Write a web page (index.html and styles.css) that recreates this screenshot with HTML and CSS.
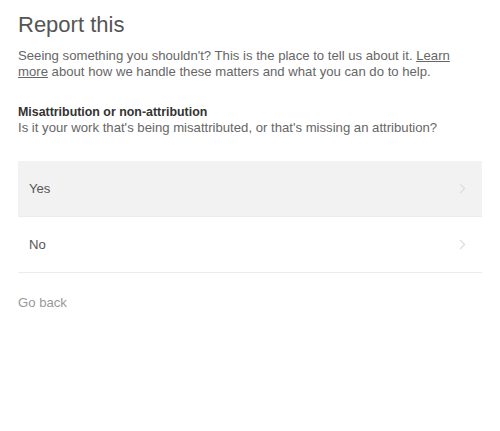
FILE: index.html
```html
<!DOCTYPE html>
<html>
<head>
<meta charset="utf-8">
<link rel="stylesheet" href="styles.css">
</head>
<body>
<div class="report">
  <h1 class="title">Report this</h1>
  <p class="intro">Seeing something you shouldn't? This is the place to tell us about it. <a class="link" href="#">Learn more</a> about how we handle these matters and what you can do to help.</p>
  <div class="question">
    <div class="q-title">Misattribution or non-attribution</div>
    <div class="q-text">Is it your work that's being misattributed, or that's missing an attribution?</div>
  </div>
  <ul class="options">
    <li class="option option-active"><span>Yes</span>
      <svg class="chev" width="7" height="11" viewBox="0 0 7 11"><path d="M1 0.8 L5.6 5.5 L1 10.2" fill="none" stroke="#dcdcdc" stroke-width="1.2"/></svg>
    </li>
    <li class="option"><span>No</span>
      <svg class="chev" width="7" height="11" viewBox="0 0 7 11"><path d="M1 0.8 L5.6 5.5 L1 10.2" fill="none" stroke="#dcdcdc" stroke-width="1.2"/></svg>
    </li>
  </ul>
  <a class="back" href="#">Go back</a>
</div>
</body>
</html>
```
FILE: styles.css
```css
html, body {
  margin: 0;
  padding: 0;
  background: #fff;
}
body {
  font-family: "Liberation Sans", Arial, sans-serif;
  font-size: 13.15px;
  line-height: 16px;
  color: #666;
}
.report {
  padding: 13px 18px 20px 18px;
}
.title {
  margin: 0;
  font-size: 22px;
  line-height: 24px;
  font-weight: normal;
  color: #555;
}
.intro {
  margin: 11px 0 0 0;
  padding-right: 14px;
}
.link {
  color: #666;
  text-decoration: underline;
}
.question {
  margin-top: 24px;
}
.q-title {
  font-size: 12.4px;
  font-weight: bold;
  color: #333;
}
.q-text {
  color: #666;
}
.options {
  list-style: none;
  margin: 25px 0 0 0;
  padding: 0;
}
.option {
  display: flex;
  align-items: center;
  justify-content: space-between;
  height: 55px;
  padding: 0 16px 0 11px;
  border-bottom: 1px solid #ececec;
  color: #555;
}
.option-active {
  background: #f2f2f2;
}
.chev {
  display: block;
}
.back {
  display: inline-block;
  margin-top: 22px;
  color: #999;
  text-decoration: none;
}
```
